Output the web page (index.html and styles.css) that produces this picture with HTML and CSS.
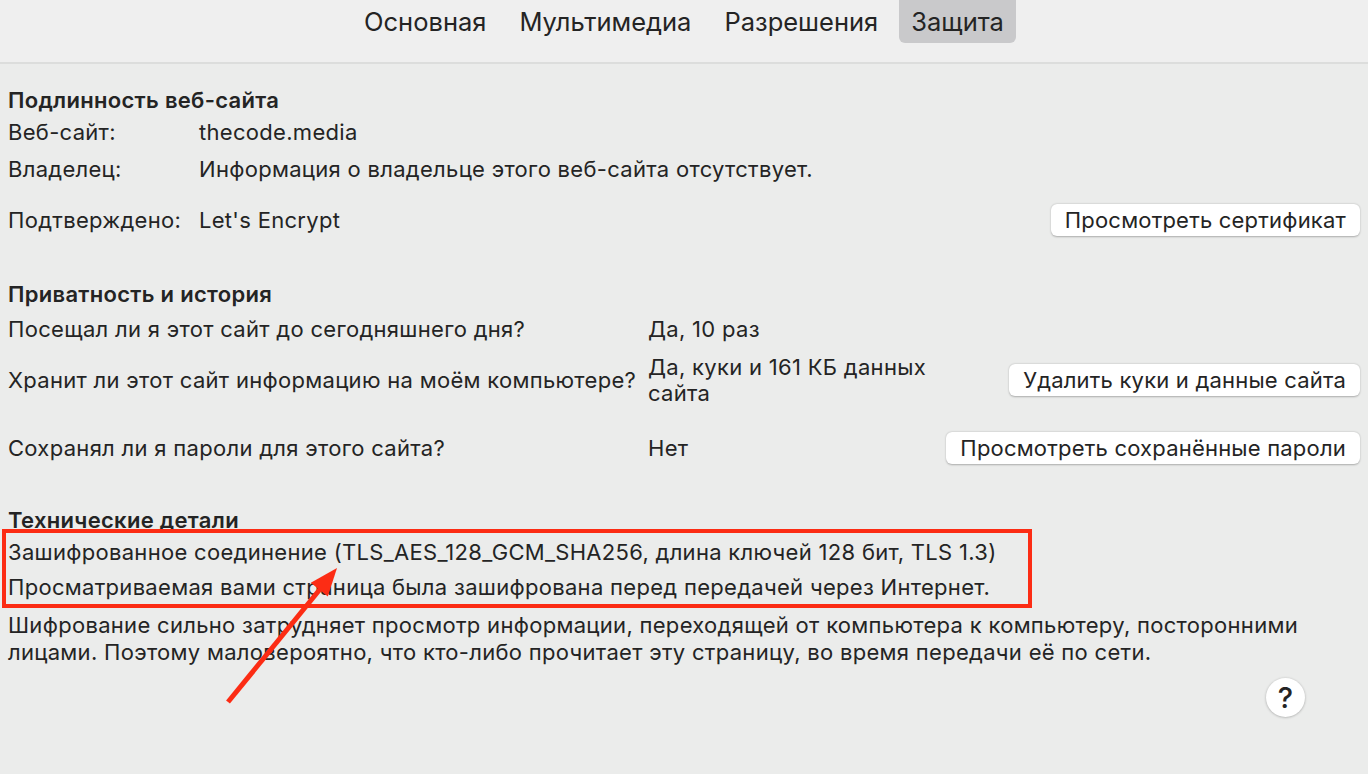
FILE: index.html
```html
<html lang="ru">
   <head>
      <meta charset="UTF-8">
      <meta name="viewport" content="width=device-width, initial-scale=1.0">
      <title>Защита</title>
      <link rel="stylesheet" href="styles.css">
   </head>
   <body>
      <nav class="tabs">
         <span class="tab">Основная</span>
         <span class="tab">Мультимедиа</span>
         <span class="tab">Разрешения</span>
         <span class="tab active">Защита</span>
      </nav>
      <main class="content">
         <section class="identity">
            <h2>Подлинность веб-сайта</h2>
            <div class="row">
               <span class="label">Веб-сайт:</span>
               <span class="value">thecode.media</span>
            </div>
            <div class="row">
               <span class="label">Владелец:</span>
               <span class="value">Информация о владельце этого веб-сайта отсутствует.</span>
            </div>
            <div class="row row-btn">
               <span class="label">Подтверждено:</span>
               <span class="value">Let's Encrypt</span>
               <button>Просмотреть сертификат</button>
            </div>
         </section>
         <section class="privacy">
            <h2>Приватность и история</h2>
            <div class="row">
               <span class="label">Посещал ли я этот сайт до сегодняшнего дня?</span>
               <span class="value">Да, 10 раз</span>
            </div>
            <div class="row row-wide">
               <span class="label">Хранит ли этот сайт информацию на моём компьютере?</span>
               <span class="value">Да, куки и 161 КБ данных сайта</span>
               <button>Удалить куки и данные сайта</button>
            </div>
            <div class="row row-last">
               <span class="label">Сохранял ли я пароли для этого сайта?</span>
               <span class="value">Нет</span>
               <button>Просмотреть сохранённые пароли</button>
            </div>
         </section>
         <section class="tech">
            <h2>Технические детали</h2>
            <div class="line">Зашифрованное соединение (TLS_AES_128_GCM_SHA256, длина ключей 128 бит, TLS 1.3)</div>
            <div class="line">Просматриваемая вами страница была зашифрована перед передачей через Интернет.</div>
            <p>Шифрование сильно затрудняет просмотр информации, переходящей от компьютера к компьютеру, посторонними лицами. Поэтому маловероятно, что кто-либо прочитает эту страницу, во время передачи её по сети.</p>
         </section>
         <div class="help">
            <button class="help-btn">?</button>
         </div>
      </main>
      <!-- markup annotation drawn over the screenshot -->
      <div class="highlight"></div>
      <svg class="arrow" width="130" height="150" viewBox="0 0 130 150">
         <line x1="8" y1="142" x2="101" y2="28" stroke="#fc2c14" stroke-width="5"/>
         <polygon points="117,8 90.8,22.8 107.8,36.6" fill="#fc2c14"/>
      </svg>
   </body>
</html>
```

FILE: styles.css
```css
body {
margin: 0;
padding: 0;
background-color: #ebeceb;
color: #242424;
font-family: "Inter", "Noto Sans", sans-serif;
font-size: 22px;
letter-spacing: 0.3px;
position: relative;
}
.tabs {
display: flex;
justify-content: center;
align-items: flex-start;
gap: 9px;
height: 62px;
background-color: #efefef;
border-bottom: 2px solid #dcdddc;
font-size: 25.5px;
letter-spacing: 0;
}
.tab {
height: 43px;
line-height: 43px;
padding: 0 12px;
border-radius: 0 0 6px 6px;
}
.tab.active {
background-color: #c9c9cb;
}
.content {
padding: 23px 8px 0;
}
h2 {
margin: 0;
font-size: 22px;
font-weight: 600;
line-height: 26px;
}
.row {
display: flex;
align-items: center;
min-height: 37px;
}
.row .label {
width: 191px;
flex-shrink: 0;
}
.row .value {
flex: 1;
}
.row-btn {
margin-top: 16px;
min-height: 34px;
}
button {
font-family: inherit;
font-size: 22px;
letter-spacing: 0.2px;
color: #242424;
height: 32px;
padding: 0 14px;
background-color: #fff;
border: none;
border-radius: 6px;
box-shadow: 0 0.5px 2px rgba(0, 0, 0, 0.28);
}
.privacy {
margin-top: 44px;
}
.privacy h2 {
margin-bottom: 3px;
}
.privacy .row .label {
width: 640px;
}
.privacy .row-wide {
margin-top: 7px;
min-height: 52px;
}
.privacy .row-wide .value {
flex: 0 0 300px;
line-height: 26px;
margin-right: auto;
}
.privacy .row-last {
margin-top: 23px;
}
.tech {
margin-top: 41px;
}
.tech h2 {
margin-bottom: 2px;
}
.tech .line {
height: 35px;
line-height: 34px;
}
.tech p {
margin: 7px 0 0;
line-height: 27px;
}
.help {
display: flex;
justify-content: flex-end;
padding-right: 55px;
margin-top: 12px;
}
.help-btn {
width: 39px;
height: 39px;
padding: 0;
border-radius: 50%;
font-size: 29px;
font-weight: 500;
line-height: 39px;
box-shadow: 0 0.5px 2.5px rgba(0, 0, 0, 0.3);
}
.highlight {
position: absolute;
left: 2px;
top: 529px;
width: 1030px;
height: 79px;
box-sizing: border-box;
border: 4px solid #fc2c14;
}
.arrow {
position: absolute;
left: 220px;
top: 560px;
}
```
